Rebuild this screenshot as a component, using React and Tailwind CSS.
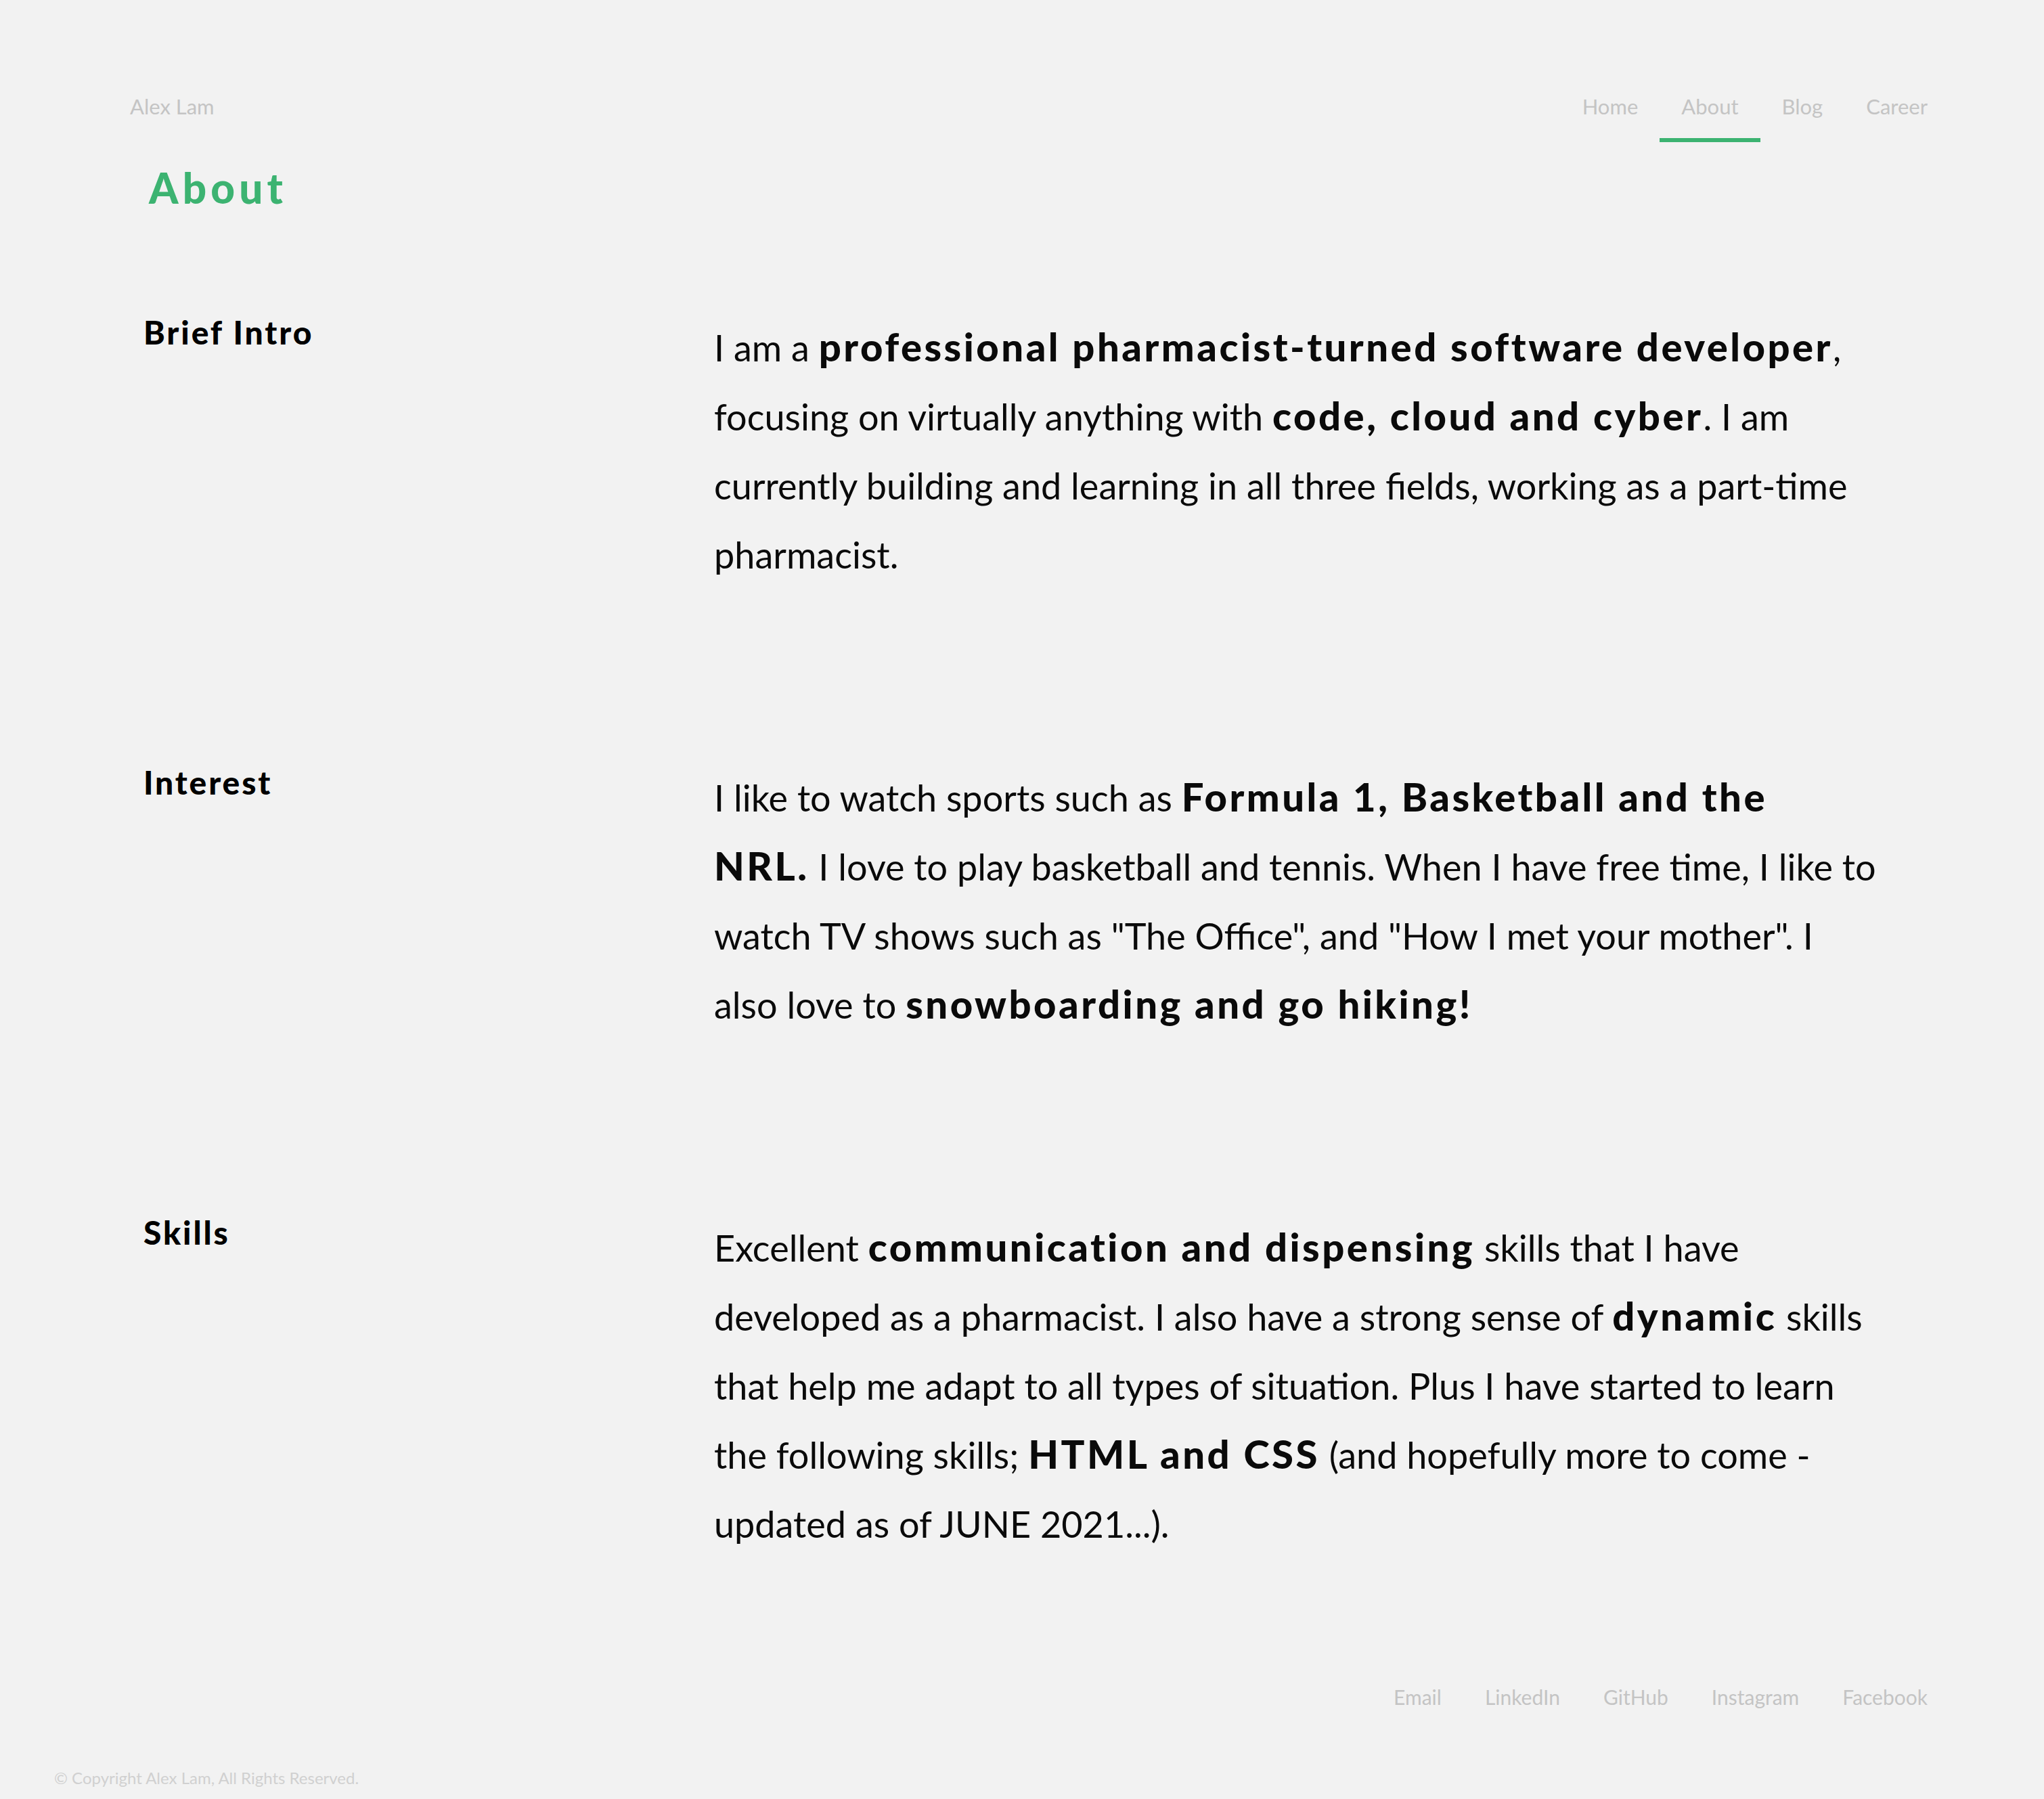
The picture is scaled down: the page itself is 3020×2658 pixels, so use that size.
const navLinks = ['Home', 'About', 'Blog', 'Career']
const footerLinks = ['Email', 'LinkedIn', 'GitHub', 'Instagram', 'Facebook']

const B = ({ children }) => <b className="text-[58px] leading-none font-black tracking-[0.06em]">{children}</b>

const Section = ({ title, children }) => (
  <div className="grid grid-cols-[843px_1780px] items-start">
    <h3 className="text-[48px] leading-[1.2] font-black tracking-[0.06em] text-black -mt-[1px]">{title}</h3>
    <p className="text-[54px] leading-[102px] text-[#0a0a0a]">{children}</p>
  </div>
)

export default function App() {
  return (
    <div
      className="min-h-[2658px] bg-[#f2f2f2] flex flex-col"
      style={{ fontFamily: 'Lato, "Open Sans", sans-serif' }}
    >
      {/* Header */}
      <header className="flex items-start justify-between pt-[139px] pl-[192px] pr-[140px]">
        <a className="text-[31px] leading-[1.2] text-[#c4c4c4]">Alex Lam</a>
        <nav className="flex">
          {navLinks.map(link => (
            <a
              key={link}
              className={`px-8 pb-[28px] text-[31px] leading-[1.2] text-[#c4c4c4] border-b-[6px] ${
                link === 'About' ? 'border-[#3cb371]' : 'border-transparent'
              }`}
            >
              {link}
            </a>
          ))}
        </nav>
      </header>

      <h1 className="mt-[36px] ml-[220px] text-[62px] leading-none font-black tracking-[0.1em] text-[#3cb371]">About</h1>

      {/* Content */}
      <main className="mt-[155px] pl-[212px] flex flex-col gap-[257px]">
        <Section title="Brief Intro">
          I am a <B>professional pharmacist-turned software developer</B>,<br />
          focusing on virtually anything with <B>code, cloud and cyber</B>. I am<br />
          currently building and learning in all three fields, working as a part-time<br />
          pharmacist.
        </Section>
        <Section title="Interest">
          I like to watch sports such as <B>Formula 1, Basketball and the</B>
          <br />
          <B>NRL.</B> I love to play basketball and tennis. When I have free time, I like to<br />
          watch TV shows such as "The Office", and "How I met your mother". I<br />
          also love to <B>snowboarding and go hiking!</B>
        </Section>
        <Section title="Skills">
          Excellent <B>communication and dispensing</B> skills that I have<br />
          developed as a pharmacist. I also have a strong sense of <B>dynamic</B> skills<br />
          that help me adapt to all types of situation. Plus I have started to learn<br />
          the following skills; <B>HTML and CSS</B> (and hopefully more to come -<br />
          updated as of JUNE 2021...).
        </Section>
      </main>

      {/* Footer */}
      <footer className="mt-auto">
        <div className="flex justify-end pr-[140px]">
          {footerLinks.map(link => (
            <a key={link} className="px-8 text-[30px] leading-[1.2] text-[#c4c4c4]">
              {link}
            </a>
          ))}
        </div>
        <p className="mt-[88px] mb-[16px] pl-[80px] text-[24px] leading-[1.2] text-[#d0d0d0]">
          © Copyright Alex Lam, All Rights Reserved.
        </p>
      </footer>
    </div>
  )
}
